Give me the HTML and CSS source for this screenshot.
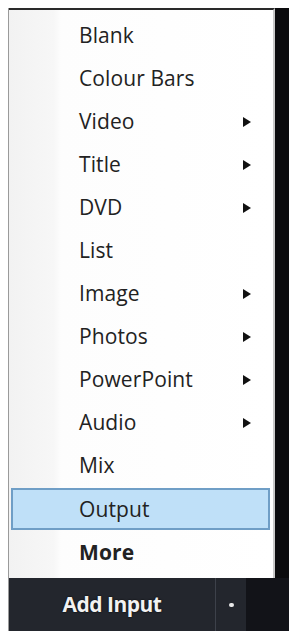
FILE: index.html
```html
<!DOCTYPE html>
<html>
<head>
    <title>Add Input</title>
    <link rel="stylesheet" href="styles.css">
</head>
<body>
    <div class="frame">
        <div class="top">
            <ul class="menu">
                <li class="item">Blank</li>
                <li class="item">Colour Bars</li>
                <li class="item sub">Video</li>
                <li class="item sub">Title</li>
                <li class="item sub">DVD</li>
                <li class="item">List</li>
                <li class="item sub">Image</li>
                <li class="item sub">Photos</li>
                <li class="item sub">PowerPoint</li>
                <li class="item sub">Audio</li>
                <li class="item">Mix</li>
                <li class="item active">Output</li>
                <li class="item bold">More</li>
            </ul>
            <div class="strip"></div>
        </div>
        <div class="bar">
            <div class="bar-main">Add Input</div>
            <div class="bar-drop"><span class="dot"></span></div>
            <div class="bar-end"></div>
        </div>
    </div>
</body>
</html>
```

FILE: styles.css
```css
body {
    margin: 0;
    background-color: #ffffff;
    font-family: "Open Sans", "Noto Sans", sans-serif;
}

.frame {
    margin: 8px 0 0 8px;
    width: 281px;
    border-left: 1px solid #9a9a9a;
    display: flex;
    flex-direction: column;
}

.top {
    display: flex;
    height: 570px;
}

.menu {
    list-style: none;
    margin: 0;
    padding: 4px 0 0 0;
    width: 264px;
    border-top: 2px solid #2a2a2a;
    border-right: 2px solid #c8c8c8;
    background: linear-gradient(to right, #f2f2f2 0, #f7f7f7 45px, #fdfdfd 52px, #ffffff 100%);
}

.item {
    position: relative;
    height: 43px;
    line-height: 43px;
    padding-left: 70px;
    font-size: 21px;
    letter-spacing: 0.1px;
    color: #222222;
}

.sub::after {
    content: "";
    position: absolute;
    left: 234px;
    top: 17px;
    border-left: 8px solid #111111;
    border-top: 5px solid transparent;
    border-bottom: 5px solid transparent;
}

.active {
    margin: 1px 3px 0 2px;
    padding-left: 66px;
    height: 38px;
    line-height: 38px;
    background-color: #bfe0f8;
    border: 2px solid #6f9ec6;
}

.bold {
    font-weight: 700;
    margin-top: 1px;
}

.strip {
    flex: 1;
    background-color: #0b0b0d;
}

.bar {
    display: flex;
    height: 53px;
    background-color: #23262d;
}

.bar-main {
    width: 206px;
    text-align: center;
    line-height: 53px;
    color: #f2f2f2;
    font-size: 21px;
    font-weight: 700;
    letter-spacing: -0.5px;
    text-shadow: 0 0 2px #000000;
    border-right: 1px solid #3d414a;
}

.bar-drop {
    width: 30px;
    display: flex;
    align-items: center;
    justify-content: center;
}

.dot {
    width: 5px;
    height: 4px;
    border-radius: 2px;
    background-color: #e8e8e8;
}

.bar-end {
    flex: 1;
    background-color: #121318;
}
```
